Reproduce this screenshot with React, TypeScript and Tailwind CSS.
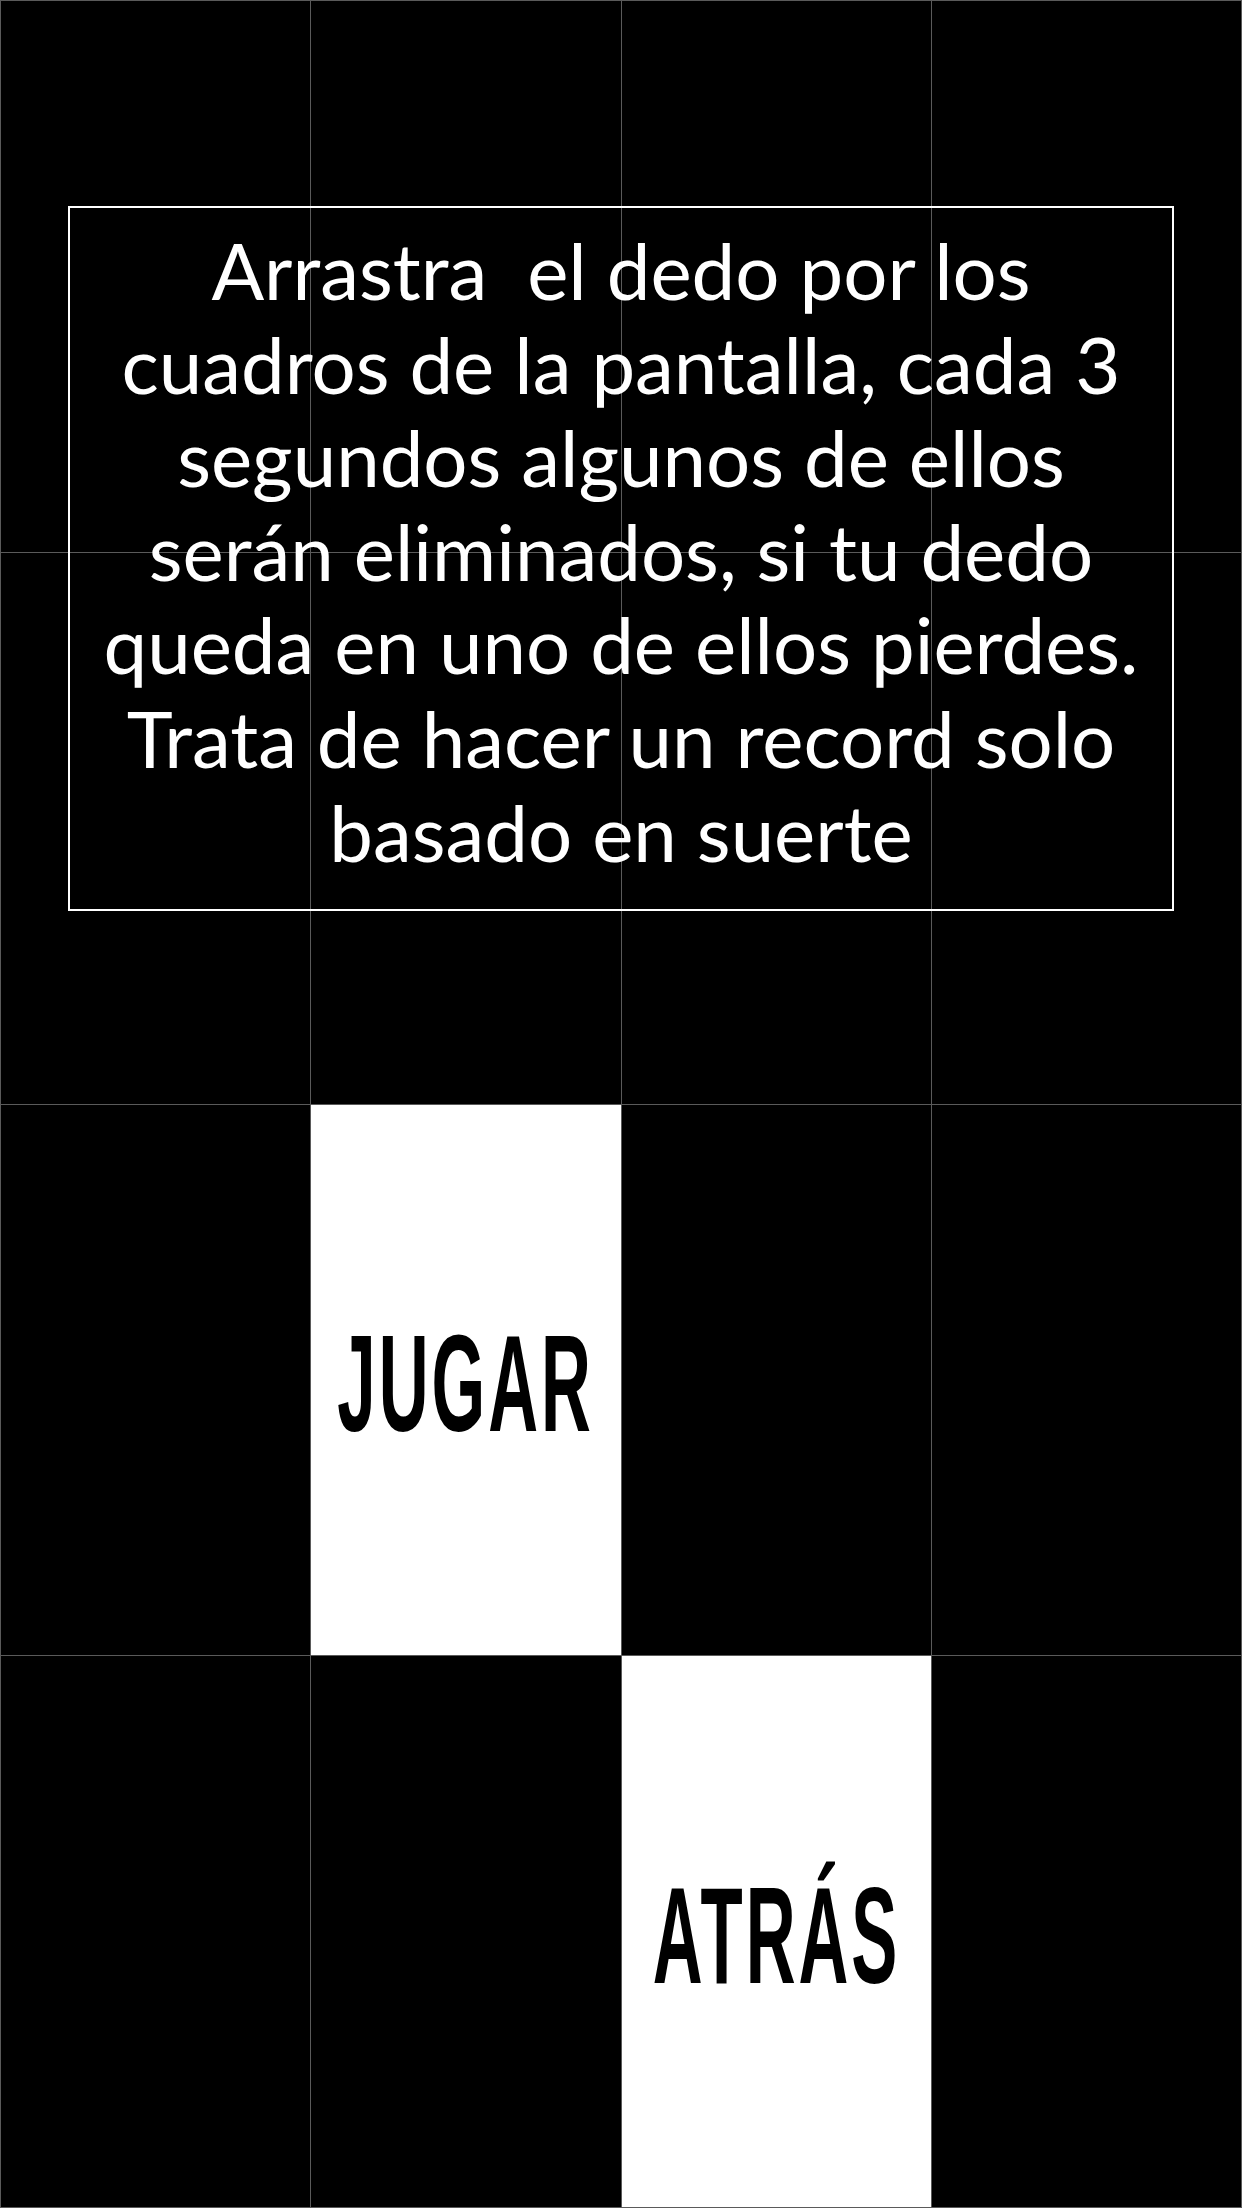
import React from "react";

const lines = [
  "Arrastra  el dedo por los",
  "cuadros de la pantalla, cada 3",
  "segundos algunos de ellos",
  "serán eliminados, si tu dedo",
  "queda en uno de ellos pierdes.",
  "Trata de hacer un record solo",
  "basado en suerte",
];

// which cells are white and what they say
const cells: { white?: boolean; label?: string }[] = [
  {}, {}, {}, {},
  {}, {}, {}, {},
  {}, { white: true, label: "JUGAR" }, {}, {},
  {}, {}, { white: true, label: "ATRÁS" }, {},
];

export default function App() {
  return (
    <div className="relative w-[1242px] h-[2208px] bg-black overflow-hidden">
      {/* Board */}
      <div className="grid grid-cols-4 grid-rows-4 gap-px bg-[#5a5a5a] p-px w-full h-full">
        {cells.map((c, i) => (
          <div
            key={i}
            className={`flex items-center justify-center ${c.white ? "bg-white" : "bg-black"}`}
          >
            {c.label && (
              <span
                className="text-black font-bold text-[138px] leading-none scale-x-[0.5] tracking-[6px] pt-[6px]"
                style={{ fontFamily: '"Liberation Sans", Arial, sans-serif' }}
              >
                {c.label}
              </span>
            )}
          </div>
        ))}
      </div>

      {/* Instructions */}
      <div className="absolute left-[68px] top-[206px] w-[1106px] h-[705px] border-2 border-white flex flex-col items-center pt-[16px]">
        <p
          className="text-white text-[78px] leading-[93.6px] font-normal text-center whitespace-pre"
          style={{ fontFamily: 'Lato, "Noto Sans", sans-serif' }}
        >
          {lines.map((l, i) => (
            <React.Fragment key={i}>
              {l}
              {i < lines.length - 1 && <br />}
            </React.Fragment>
          ))}
        </p>
      </div>
    </div>
  );
}
